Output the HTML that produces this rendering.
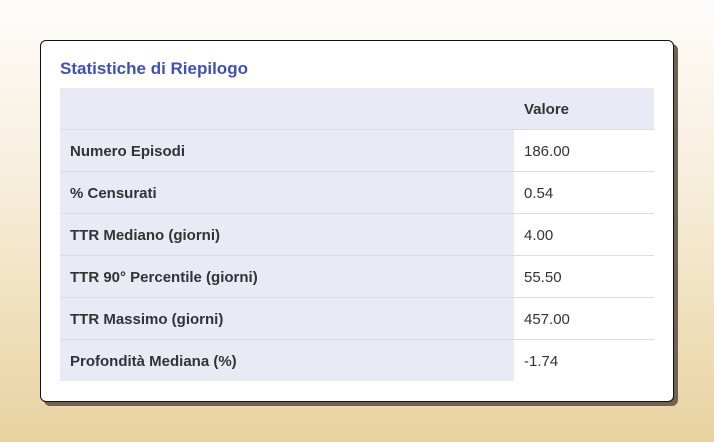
<!DOCTYPE html>
<html><head><style>
html,body{margin:0;padding:0;width:714px;height:442px;overflow:hidden}
body{background:linear-gradient(to bottom,#fefdfb 0%,#f7eedc 40%,#e9d29f 100%);font-family:"Liberation Sans",sans-serif;position:relative}
.card{position:absolute;left:40px;top:40px;width:632px;height:360px;background:#fff;border:1px solid #111;border-radius:6px;box-shadow:4px 4px 0 #6e6353}
h2{position:absolute;left:19px;top:18px;margin:0;font-size:17px;color:#3f51b5;font-weight:bold}
table{position:absolute;left:19px;top:47px;width:594px;border-collapse:collapse;font-size:15px;color:#333}
td,th{height:42px;padding:3px 10px 0;box-sizing:border-box;border-bottom:1px solid #dcdde3;text-align:left}
th{height:41px;padding-top:2px}
tr:last-child td{border-bottom:none}
th{background:#e8eaf6;font-weight:bold}
td:first-child{background:#e8eaf6;font-weight:bold;width:454px}
</style></head><body>
<div class="card">
<h2>Statistiche di Riepilogo</h2>
<table>
<tr><th></th><th>Valore</th></tr>
<tr><td>Numero Episodi</td><td>186.00</td></tr>
<tr><td>% Censurati</td><td>0.54</td></tr>
<tr><td>TTR Mediano (giorni)</td><td>4.00</td></tr>
<tr><td>TTR 90° Percentile (giorni)</td><td>55.50</td></tr>
<tr><td>TTR Massimo (giorni)</td><td>457.00</td></tr>
<tr><td>Profondità Mediana (%)</td><td>-1.74</td></tr>
</table>
</div>
</body></html>
